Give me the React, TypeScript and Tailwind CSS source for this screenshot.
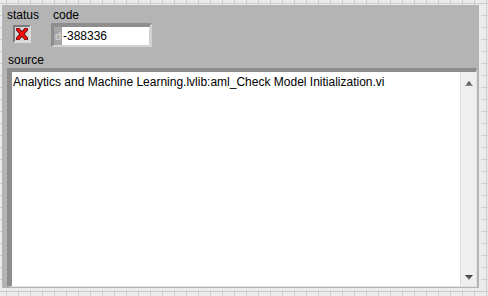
import React from "react";

const font = { fontFamily: '"Liberation Sans", Arial, sans-serif' };

export default function App() {
  return (
    <div
      className="relative w-[488px] h-[296px] overflow-hidden bg-[#ebebeb] bg-[image:linear-gradient(to_right,#cdcdcd_1px,transparent_1px),linear-gradient(to_bottom,#cdcdcd_1px,transparent_1px)] bg-[size:12px_12px] bg-[position:6px_3px]"
      style={font}
    >
      <div className="ml-[2px] mt-[5px] w-[479px] h-[285px] bg-[#b4b4b4] border-r-2 border-b-2 border-[#ececec] pl-[5px] pt-[3px] text-[12px] leading-[14px] text-black">
        <div className="flex items-start">
          <div className="w-[44px] flex flex-col">
            <div className="h-[14px]">status</div>
            <div className="mt-[3px] ml-[6px] w-[18px] h-[18px] border-t-2 border-l-2 border-[#7c7c7c] border-r-2 border-b-2 border-r-[#dcdcdc] border-b-[#dcdcdc] bg-[#d6d6d6] flex items-center justify-center">
              <svg width="12" height="12" viewBox="0 0 12 12">
                <path d="M2 1.5 L10 10.5 M10 1.5 L2 10.5" stroke="#5a0000" strokeWidth="4" strokeLinecap="square" />
                <path d="M2 1.5 L10 10.5 M10 1.5 L2 10.5" stroke="#ff1010" strokeWidth="2.2" strokeLinecap="square" />
              </svg>
            </div>
          </div>
          <div className="flex flex-col">
            <div className="h-[14px] ml-[2px]">code</div>
            <div className="mt-[1px] w-[101px] h-[24px] flex border-t-[4px] border-l-[3px] border-[#8e8e8e] border-r-[3px] border-b-[2px] border-r-[#d2d2d2] border-b-[#d2d2d2]">
              <div className="w-[8px] bg-[#a6a6a6] text-[#dcdcdc] text-[11px] leading-[18px] pl-[1px]">d</div>
              <div className="flex-1 bg-white leading-[18px] pl-[1px]">-388336</div>
            </div>
          </div>
        </div>
        <div className="mt-[6px] ml-[1px] h-[14px]">source</div>
        <div className="mt-[1px] w-[470px] h-[219px] flex border-t-[4px] border-l-[5px] border-[#8e8e8e] border-r border-b border-r-[#e2e2e2] border-b-[#e2e2e2]">
          <div className="flex-1 bg-white pl-[1px] pt-[3px] whitespace-nowrap overflow-hidden">
            Analytics and Machine Learning.lvlib:aml_Check Model Initialization.vi
          </div>
          <div className="w-[16px] bg-[#efefef] border-l border-[#dddddd] flex flex-col items-center justify-between pt-[9px] pb-[6px]">
            <svg width="8" height="5" viewBox="0 0 8 5">
              <defs>
                <linearGradient id="ga" x1="0" y1="0" x2="0" y2="1">
                  <stop offset="0" stopColor="#3a3a3a" />
                  <stop offset="1" stopColor="#8a8a8a" />
                </linearGradient>
              </defs>
              <polygon points="4,0 8,5 0,5" fill="url(#ga)" />
            </svg>
            <svg width="8" height="5" viewBox="0 0 8 5">
              <defs>
                <linearGradient id="gb" x1="0" y1="0" x2="0" y2="1">
                  <stop offset="0" stopColor="#3a3a3a" />
                  <stop offset="1" stopColor="#8a8a8a" />
                </linearGradient>
              </defs>
              <polygon points="0,0 8,0 4,5" fill="url(#gb)" />
            </svg>
          </div>
        </div>
      </div>
    </div>
  );
}
